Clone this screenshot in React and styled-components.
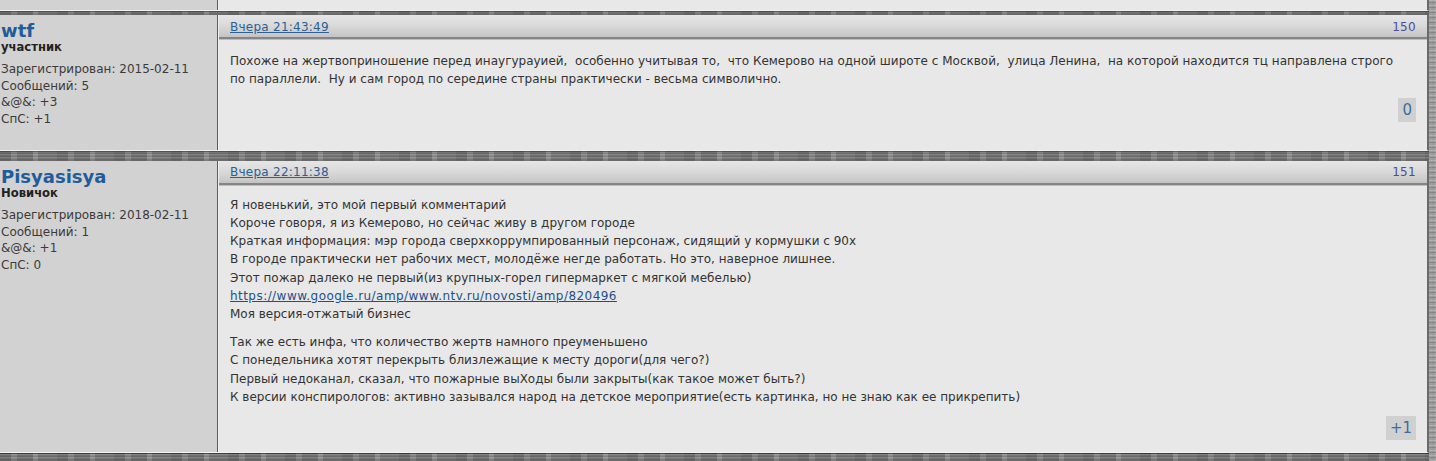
import React from "react";
import styled, { createGlobalStyle } from "styled-components";

const Global = createGlobalStyle`
  html, body { margin: 0; padding: 0; }
  body {
    width: 1436px;
    height: 461px;
    overflow: hidden;
    font-family: "DejaVu Sans", Verdana, sans-serif;
    background-color: #a2a2a2;
    background-image:
      repeating-linear-gradient(0deg, rgba(255,255,255,0.2) 0 1px, rgba(0,0,0,0) 1px 3px, rgba(0,0,0,0.14) 3px 4px, rgba(0,0,0,0) 4px 5px),
      repeating-linear-gradient(90deg, rgba(0,0,0,0.05) 0 3px, rgba(255,255,255,0.06) 3px 5px, rgba(0,0,0,0.03) 5px 8px);
  }
`;

const Page = styled.main`
  width: 1427px;
  display: flex;
  flex-direction: column;
`;

const Separator = styled.div`
  height: ${(p) => p.$h}px;
  width: 1429px;
  background-color: #767676;
  background-image:
    linear-gradient(180deg, rgba(0,0,0,0.4) 0 1px, rgba(0,0,0,0) 1px calc(100% - 1px), rgba(0,0,0,0.2) calc(100% - 1px)),
    repeating-linear-gradient(0deg, rgba(255,255,255,0.12) 0 1px, rgba(0,0,0,0.1) 1px 2px, rgba(0,0,0,0) 2px 3px),
    repeating-linear-gradient(90deg, #6c6c6c 0 11px, #858585 11px 17px, #707070 17px 33px, #8e8e8e 33px 38px, #767676 38px 57px);
`;

const Post = styled.article`
  display: flex;
  width: 1427px;
  border-right: 2px solid #6a6a6a;
  border-bottom: 1px solid #f2f2f2;
  background: #e8e8e8;
  height: ${(p) => (p.$clip ? `${p.$clip}px` : "auto")};
  overflow: hidden;
`;

const Side = styled.aside`
  flex: none;
  width: 216px;
  background: #d2d2d2;
  border-right: 1px solid #5d5d5d;
  padding: 6px 0 22px 1px;
  color: #333;
`;

const Name = styled.div`
  font-weight: bold;
  font-size: 18px;
  line-height: 20px;
  color: #1f5c99;
`;

const Rank = styled.div`
  font-weight: bold;
  font-size: 11.6px;
  line-height: 13px;
  color: #222;
  margin-bottom: 7px;
`;

const Stat = styled.div`
  font-size: 12px;
  line-height: 16.7px;
  color: #3a3a3a;
`;

const Main = styled.section`
  flex: 1;
  display: flex;
  flex-direction: column;
  border-left: 1px solid #f0f0f0;
  min-width: 0;
`;

const Header = styled.header`
  height: 21px;
  display: flex;
  align-items: center;
  justify-content: space-between;
  padding: 1px 11px 0 11px;
  background: linear-gradient(180deg, #e6e6e6 0%, #dadada 45%, #cdcdcd 80%, #c2c2c2 100%);
  border-bottom: 2px solid #858585;
  box-shadow: 0 1px 0 #bdbdbd;
`;

const DateLink = styled.a`
  font-size: 12px;
  letter-spacing: 0.25px;
  color: #2c5f94;
  text-decoration: underline;
`;

const PostNo = styled.span`
  font-size: 12px;
  letter-spacing: 0.3px;
  color: #4d4d9a;
`;

const Body = styled.div`
  flex: 1;
  display: flex;
  flex-direction: column;
  padding: ${(p) => p.$top ?? 13}px 11px 12px 11px;
`;

const Text = styled.div`
  font-size: 12px;
  line-height: 18.2px;
  color: #333;
  white-space: pre-wrap;
  & + & { margin-top: 10px; }
`;

const Link = styled.a`
  color: #1e4f8c;
  letter-spacing: 0.45px;
  text-decoration: underline;
`;

const VoteRow = styled.div`
  display: flex;
  justify-content: flex-end;
  margin-top: 10px;
`;

const Vote = styled.span`
  background: #d0d0d0;
  color: #3e6d9c;
  font-size: 15px;
  line-height: 24px;
  padding: 0 4px;
`;

function UserSide({ name, rank, reg, msgs, amp, sps }) {
  return (
    <Side>
      <Name>{name}</Name>
      <Rank>{rank}</Rank>
      <Stat>Зарегистрирован: {reg}</Stat>
      <Stat>Сообщений: {msgs}</Stat>
      <Stat>&amp;@&amp;: {amp}</Stat>
      <Stat>СпС: {sps}</Stat>
    </Side>
  );
}

export default function App() {
  return (
    <>
      <Global />
      <Page>
        <Post $clip={10}>
          <Side />
          <Main />
        </Post>
        <Separator $h={4} />
        <Post>
          <UserSide name="wtf" rank="участник" reg="2015-02-11" msgs="5" amp="+3" sps="+1" />
          <Main>
            <Header>
              <DateLink href="#">Вчера 21:43:49</DateLink>
              <PostNo>150</PostNo>
            </Header>
            <Body>
              <Text>
                {"Похоже на жертвоприношение перед инаугурауией,  особенно учитывая то,  что Кемерово на одной широте с Москвой,  улица Ленина,  на которой находится тц направлена строго\nпо параллели.  Ну и сам город по середине страны практически - весьма символично."}
              </Text>
              <VoteRow>
                <Vote>0</Vote>
              </VoteRow>
            </Body>
          </Main>
        </Post>
        <Separator $h={10} />
        <Post>
          <UserSide name="Pisyasisya" rank="Новичок" reg="2018-02-11" msgs="1" amp="+1" sps="0" />
          <Main>
            <Header>
              <DateLink href="#">Вчера 22:11:38</DateLink>
              <PostNo>151</PostNo>
            </Header>
            <Body $top={11}>
              <Text>
                {"Я новенький, это мой первый комментарий\nКороче говоря, я из Кемерово, но сейчас живу в другом городе\nКраткая информация: мэр города сверхкоррумпированный персонаж, сидящий у кормушки с 90х\nВ городе практически нет рабочих мест, молодёже негде работать. Но это, наверное лишнее.\nЭтот пожар далеко не первый(из крупных-горел гипермаркет с мягкой мебелью)\n"}
                <Link href="#">https://www.google.ru/amp/www.ntv.ru/novosti/amp/820496</Link>
                {"\nМоя версия-отжатый бизнес"}
              </Text>
              <Text>
                {"Так же есть инфа, что количество жертв намного преуменьшено\nС понедельника хотят перекрыть близлежащие к месту дороги(для чего?)\nПервый недоканал, сказал, что пожарные выХоды были закрыты(как такое может быть?)\nК версии конспирологов: активно зазывался народ на детское мероприятие(есть картинка, но не знаю как ее прикрепить)"}
              </Text>
              <VoteRow>
                <Vote>+1</Vote>
              </VoteRow>
            </Body>
          </Main>
        </Post>
        <Separator $h={8} />
      </Page>
    </>
  );
}
